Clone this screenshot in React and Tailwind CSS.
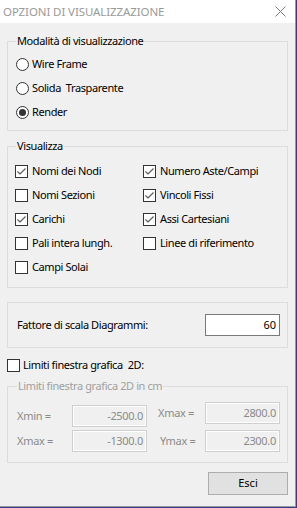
import React from "react";

const font = { fontFamily: '"Noto Sans", "Open Sans", sans-serif' };

function Radio({ checked, label }) {
  return (
    <div className="flex h-[24px] items-center">
      <span className="flex h-[13px] w-[13px] items-center justify-center rounded-full border border-[#333333] bg-white">
        {checked && <span className="h-[7px] w-[7px] rounded-full bg-[#333333]" />}
      </span>
      <span className="ml-[3px] whitespace-pre text-[11px] leading-[16px] tracking-[-0.4px] text-black">{label}</span>
    </div>
  );
}

function Check({ checked, label }) {
  return (
    <div className="flex h-[24px] items-center">
      <span className="flex h-[13px] w-[13px] shrink-0 items-center justify-center border border-[#333333] bg-white">
        {checked && (
          <svg width="11" height="11" viewBox="0 0 11 11">
            <polyline points="1.5,5.5 4,8 9.5,2.5" fill="none" stroke="#555555" strokeWidth="1.1" />
          </svg>
        )}
      </span>
      <span className="ml-[4px] whitespace-nowrap text-[11px] leading-[16px] tracking-[-0.4px] text-black">{label}</span>
    </div>
  );
}

function DisabledInput({ value }) {
  return (
    <div className="flex h-[22px] w-[75px] items-center justify-end border border-[#cfcfcf] bg-[#f0f0f0] pr-[3px] text-[11px] tracking-[-0.3px] text-[#8a8a8a] shadow-[inset_0_0_0_1px_#ffffff]">
      {value}
    </div>
  );
}

export default function App() {
  return (
    <div style={font} className="h-[508px] w-[297px] bg-[#3a3a8a]">
      <div className="flex h-[507px] w-[296px] flex-col border-b border-r border-[#9a9a9a] bg-[#f0f0f0]">
        <div className="flex h-[23px] shrink-0 items-center justify-between bg-white pl-[3px] pr-[9px]">
          <span className="text-[11.5px] leading-[16px] tracking-[-0.1px] text-[#9a9a9a]">OPZIONI DI VISUALIZZAZIONE</span>
          <svg width="11" height="11" viewBox="0 0 11 11">
            <path d="M0.5 0.5 L10.5 10.5 M10.5 0.5 L0.5 10.5" stroke="#7a7a7a" strokeWidth="1" />
          </svg>
        </div>

        <div className="flex flex-col px-[7px]">
          <fieldset className="mt-[10px] border border-[#dcdcdc] px-[8px] pb-[6px] pt-[3px]">
            <legend className="px-[1px] text-[11px] leading-[16px] tracking-[-0.4px] text-black">Modalità di visualizzazione</legend>
            <Radio label="Wire Frame" />
            <Radio label="Solida  Trasparente" />
            <Radio checked label="Render" />
          </fieldset>

          <fieldset className="mt-[7px] border border-[#dcdcdc] pb-[8px] pl-[7px] pr-[8px] pt-[5px]">
            <legend className="ml-[1px] px-[1px] text-[11px] leading-[16px] tracking-[-0.4px] text-black">Visualizza</legend>
            <div className="grid grid-cols-[128px_1fr]">
              <Check checked label="Nomi dei Nodi" />
              <Check checked label="Numero Aste/Campi" />
              <Check label="Nomi Sezioni" />
              <Check checked label="Vincoli Fissi" />
              <Check checked label="Carichi" />
              <Check checked label="Assi Cartesiani" />
              <Check label="Pali intera lungh." />
              <Check label="Linee di riferimento" />
              <Check label="Campi Solai" />
            </div>
          </fieldset>

          <div className="mt-[14px] flex h-[46px] items-center justify-between border border-[#dcdcdc] pl-[9px] pr-[7px]">
            <span className="text-[11px] leading-[16px] tracking-[-0.4px] text-black">Fattore di scala Diagrammi:</span>
            <div className="flex h-[22px] w-[75px] items-center justify-end border border-[#7a7a7a] bg-white pr-[3px] text-[11px] text-black">
              60
            </div>
          </div>

          <div className="mt-[7px] flex h-[20px] items-center">
            <span className="h-[13px] w-[13px] border border-[#333333] bg-white" />
            <span className="ml-[3px] whitespace-pre text-[11px] leading-[16px] tracking-[-0.4px] text-black">Limiti finestra grafica  2D:</span>
          </div>

          <fieldset className="mt-[3px] border border-[#dcdcdc] pb-[10px] pl-[9px] pr-[7px]">
            <legend className="px-[1px] text-[11px] leading-[16px] tracking-[-0.4px] text-[#a0a0a0]">Limiti finestra grafica 2D in cm</legend>
            <div className="flex justify-between">
              <div className="flex w-[130px] flex-col gap-[3px] pt-[11px]">
                <div className="flex items-center justify-between">
                  <span className="text-[11px] tracking-[-0.3px] text-[#8a8a8a]">Xmin =</span>
                  <DisabledInput value="-2500.0" />
                </div>
                <div className="flex items-center justify-between">
                  <span className="text-[11px] tracking-[-0.3px] text-[#8a8a8a]">Xmax =</span>
                  <DisabledInput value="-1300.0" />
                </div>
              </div>
              <div className="flex w-[122px] flex-col gap-[6px] pt-[8px]">
                <div className="flex items-center justify-between">
                  <span className="text-[11px] tracking-[-0.3px] text-[#8a8a8a]">Xmax =</span>
                  <DisabledInput value="2800.0" />
                </div>
                <div className="flex items-center justify-between">
                  <span className="pl-[2px] text-[11px] tracking-[-0.3px] text-[#8a8a8a]">Ymax =</span>
                  <DisabledInput value="2300.0" />
                </div>
              </div>
            </div>
          </fieldset>

          <div className="mt-[9px] flex justify-end">
            <button className="flex h-[23px] w-[80px] items-center justify-center border border-[#adadad] bg-[#e1e1e1] text-[11px] text-black">
              Esci
            </button>
          </div>
        </div>
      </div>
    </div>
  );
}
